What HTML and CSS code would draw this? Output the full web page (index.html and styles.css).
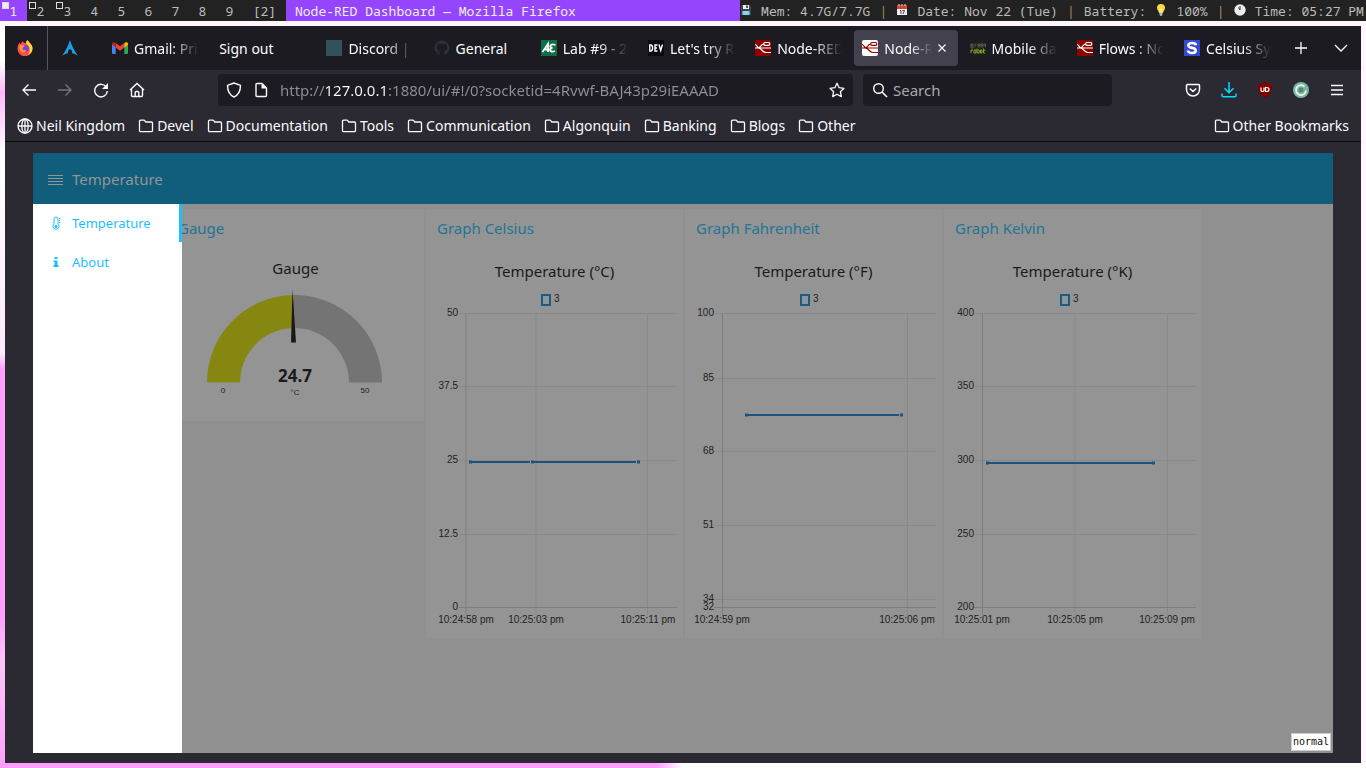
FILE: index.html
```html
<!DOCTYPE html>
<html lang="en">
<head>
<meta charset="utf-8">
<title>Node-RED Dashboard</title>
<link rel="stylesheet" href="styles.css">
</head>
<body>
<svg class="defs" aria-hidden="true">
  <symbol id="folder" viewBox="0 0 16 16"><path d="M1.500 12.500V3.300c0-.7.5-1.200 1.200-1.200h3.100c.4 0 .8.2 1 .5l1 1.400h5.600c.7 0 1.100.5 1.100 1.100v7.400c0 .7-.5 1.200-1.200 1.200H2.700c-.7 0-1.200-.5-1.200-1.200z" fill="none" stroke="currentColor" stroke-width="1.300"/></symbol>
  <symbol id="nodered" viewBox="0 0 16 16"><path d="M0 8h3c3 0 2.500-4 6-4M3 8c4 0 4 4.500 8 4.500h5M0 4.500C2 4.500 2 8 4.500 8H8M10 2.500h3.500q1.300 0 1.300 1.400T13.500 5.300H10Q8.700 5.300 8.700 3.900T10 2.500M8 8h8" fill="none" stroke="currentColor" stroke-width="1.200"/></symbol>
</svg>

<header class="statusbar">
  <nav class="tags" aria-label="Workspaces">
    <button class="tag tag-active tag-full">1</button>
    <button class="tag tag-used">2</button>
    <button class="tag tag-used">3</button>
    <button class="tag">4</button>
    <button class="tag">5</button>
    <button class="tag">6</button>
    <button class="tag">7</button>
    <button class="tag">8</button>
    <button class="tag">9</button>
    <button class="tag tag-layout">[2]</button>
  </nav>
  <div class="window-title">Node-RED Dashboard — Mozilla Firefox</div>
  <div class="stats">
    <svg class="emoji" viewBox="0 0 12 12"><path d="M1 1h9l1 1v9H1z" fill="#3b4650"/><path d="M3 1h6v4H3z" fill="#eee"/><path d="M2.500 7h7v4h-7z" fill="#8ed0f2"/><path d="M6 1.500h2v2.500H6z" fill="#555"/></svg>
    <span>Mem: 4.7G/7.7G</span><span class="bar">|</span>
    <svg class="emoji" viewBox="0 0 12 12"><path d="M1 1h10v10H1z" fill="#eee"/><path d="M1 1h10v4H1z" fill="#d8432f"/><path d="M3 0v2M6 0v2M9 0v2" stroke="#ddd"/><path d="M4 6.500h1V10M6.500 6.500h2L7 10" fill="none" stroke="#444"/></svg>
    <span>Date: Nov 22 (Tue)</span><span class="bar">|</span>
    <span>Battery:</span>
    <svg class="emoji" viewBox="0 0 12 12"><path d="M6 0a4 4 0 0 1 4 4c0 2-2 3-2 5H4c0-2-2-3-2-5a4 4 0 0 1 4-4z" fill="#fcd93b"/><path d="M4.500 9h3v2l-1 1h-1l-1-1z" fill="#aab5ba"/><path d="M5 8V5h2v3" fill="none" stroke="#fff3a8"/></svg>
    <span>100%</span><span class="bar">|</span>
    <svg class="emoji" viewBox="0 0 12 12"><circle cx="6" cy="6" r="5.700" fill="#e9edef"/><path d="M6 2v4L4.500 3.500" fill="none" stroke="#333"/></svg>
    <span>Time: 05:27 PM</span>
  </div>
</header>

<main class="window">
  <div class="tabstrip">
    <button class="pin pin-home" aria-label="Firefox View"><svg class="i16" viewBox="0 0 16 16"><path d="M.5 9C.3 6 1.500 4 2.600 2.500l.6 1.700C5 3 5 1.500 6 1c0 1.500 1.500 2 3 2.200C9 2 9.500.8 10.800 0c0 2 4.700 3.800 4.700 8.500a7.500 7.500 0 0 1-15 .5z" fill="#ff4f4a"/><path d="M10.800 0c0 2 4.700 3.800 4.700 8.500 0 3-2 5.500-4.500 6.700C14 11 13 6 9 3.200 9 2 9.500.8 10.800 0z" fill="#ffd83d"/><circle cx="8.500" cy="8.500" r="3.300" fill="#7a3fe0"/><path d="M2.500 5c2.500-.8 3.500.8 5 .8-.3 1.500-2.300 1.700-2 3.200.2 1.500 3 1.500 4 1-1 3.500-6.500 2.500-7-1.500z" fill="#ff9a2e"/></svg></button>
    <button class="pin" aria-label="Arch Linux"><svg class="i16" viewBox="0 0 16 16"><path d="M8 0C6.500 5 3.500 11 .2 15.800c2.300-1.500 4-2.300 5.700-2.600-.2-2 .6-4 2.100-4s2.300 2 2.100 4c1.700.3 3.400 1.100 5.700 2.600C12.500 11 9.500 5 8 0z" fill="#1d9ee0"/></svg></button>
    <div class="tabs">
      <button class="tab"><svg class="i16" viewBox="0 0 16 16"><path d="M0 3.500 3.700 6v8H1.200Q0 14 0 12.800z" fill="#4285f4"/><path d="M16 3.500 12.300 6v8h2.500q1.200 0 1.200-1.200z" fill="#34a853"/><path d="M3.700 3 8 6.300 12.300 3v4.500L8 10.700 3.700 7.500z" fill="#ea4335"/><path d="M0 4c0-2 2-2.500 3.700-1v4.500L0 4.800z" fill="#c5221f"/><path d="M16 4c0-2-2-2.500-3.700-1v4.500L16 4.800z" fill="#fbbc04"/></svg><span class="label">Gmail: Pri</span></button>
      <button class="tab"><span class="label label-full">Sign out</span></button>
      <button class="tab"><svg class="i16" viewBox="0 0 16 16"><path d="M0 0h16v16H0z" fill="#315259"/></svg><span class="label">Discord | #</span></button>
      <button class="tab"><svg class="i16" viewBox="0 0 16 16"><path d="M8 .5a7.500 7.500 0 0 0-2.400 14.600v-2.300c-2 .4-2.500-1-2.500-1-.4-.8-.8-1.100-.8-1.100 1.300 0 1.500 1 2.200 1.400.5.200 1 .1 1.200-.1.100-.5.300-.8.500-1-2-.3-3.400-1.200-3.400-3.600 0-.8.300-1.500.8-2 0-.5-.2-1.100.1-2 .8 0 1.500.4 2.100.8a7 7 0 0 1 4.400 0c.6-.4 1.300-.8 2.100-.8.300.9.100 1.500.1 2 .5.500.8 1.200.8 2 0 2.400-1.400 3.300-3.400 3.600.4.300.6.900.6 1.700v2.400A7.500 7.500 0 0 0 8 .5z" fill="#2b3137"/></svg><span class="label label-full">General</span></button>
      <button class="tab"><svg class="i16" viewBox="0 0 16 16"><path d="M0 0h16v16H0z" fill="#0f6e44"/><path d="m1.500 12 5.500-8v8M4 9.500h4M14.500 5q-4-1.500-5 .5-1 2 2 2.500-2.500 0-2.500 2 .5 2.500 5 1" fill="none" stroke="#fff" stroke-width="1.800"/></svg><span class="label">Lab #9 - 2</span></button>
      <button class="tab"><svg class="i16" viewBox="0 0 16 16"><path d="M0 0h16v16H0z" fill="#0a0a0a"/><path d="M1.800 5v6h1Q4.600 11 4.600 8T2.800 5zM9.500 5H7v6h2.500M7 8h2M11 4.500l1.700 6L14.500 4.500" fill="none" stroke="#fff" stroke-width="1.400"/></svg><span class="label">Let's try R</span></button>
      <button class="tab"><svg class="i16 nr" viewBox="0 0 16 16"><use href="#nodered"/></svg><span class="label">Node-RED</span></button>
      <button class="tab tab-active"><svg class="i16 nr-light" viewBox="0 0 16 16"><use href="#nodered"/></svg><span class="label">Node-RE</span><svg class="close" viewBox="0 0 8 8"><path d="m.5.5 7 7m0-7-7 7" stroke="currentColor" stroke-width="1.200"/></svg></button>
      <button class="tab"><svg class="i16" viewBox="0 0 16 16"><path d="M0 0h16v16H0z" fill="#1d1e1d"/><path d="M1 4h2v4H1zM1 4v2h2M5 7V4h1.500M8 5.500h2V4H8v3h2M11 5.500h2V4h-2v3h2M14 7V4h1.500v3" fill="none" stroke="#555b55"/><path d="M1 13v-3h2M4 10h2v3H4zM7 8.500V13h2.200v-3H7M10.500 10h1.500v3h-1.500zM13.500 8.500V13H15M13 10.200h2.500" fill="none" stroke="#86a62a"/></svg><span class="label">Mobile da</span></button>
      <button class="tab"><svg class="i16 nr" viewBox="0 0 16 16"><use href="#nodered"/></svg><span class="label">Flows : No</span></button>
      <button class="tab"><svg class="i16" viewBox="0 0 16 16"><path d="M0 0h16v16H0z" fill="#3747d6"/><path d="M12 5.200Q11.500 3 8 3T4.300 5.400Q4.500 7.300 8 7.900t3.800 2.700Q11.600 13 8 13t-4.200-2.500" fill="none" stroke="#fff" stroke-width="2.600"/></svg><span class="label">Celsius Sy</span></button>
    </div>
    <button class="tool" aria-label="New tab"><svg class="i16" viewBox="0 0 16 16"><path d="M8 2v12M2 8h12" stroke="currentColor" stroke-width="1.300"/></svg></button>
    <button class="tool" aria-label="List tabs"><svg class="i16" viewBox="0 0 16 16"><path d="m2 5 6 6 6-6" fill="none" stroke="currentColor" stroke-width="1.300"/></svg></button>
  </div>

  <div class="toolbar">
    <button class="tool" aria-label="Back"><svg class="i16" viewBox="0 0 16 16"><path d="M15 8H2M7.500 2.500 2 8l5.500 5.500" fill="none" stroke="currentColor" stroke-width="1.300"/></svg></button>
    <button class="tool tool-off" aria-label="Forward"><svg class="i16" viewBox="0 0 16 16"><path d="M1 8h13M8.500 2.500 14 8l-5.500 5.500" fill="none" stroke="currentColor" stroke-width="1.300"/></svg></button>
    <button class="tool" aria-label="Reload"><svg class="i16" viewBox="0 0 16 16"><path d="M13.500 5.500A6.300 6.300 0 1 0 14.300 9" fill="none" stroke="currentColor" stroke-width="1.400"/><path d="M15 1v6H9z" fill="currentColor"/></svg></button>
    <button class="tool" aria-label="Home"><svg class="i16" viewBox="0 0 16 16"><path d="M1 8 8 1.500 15 8M2.500 7v6.500q0 1 1 1h9q1 0 1-1V7M6.200 14.500v-4q0-1 1-1h1.600q1 0 1 1v4" fill="none" stroke="currentColor" stroke-width="1.400"/></svg></button>
    <div class="urlbar">
      <svg class="i16" viewBox="0 0 16 16"><path d="M8 1 14.500 3.300c0 5.500-1.500 9.500-6.500 11.700C3 12.800 1.500 8.800 1.500 3.300z" fill="none" stroke="currentColor" stroke-width="1.400" stroke-linejoin="round"/></svg>
      <svg class="i16" viewBox="0 0 16 16"><path d="M4 1.500h5l4.500 4.500v7.500q0 1-1 1H4q-1 0-1-1v-11q0-1 1-1z" fill="none" stroke="currentColor" stroke-width="1.400"/><path d="M8.500 1.500V6.500h5z" fill="currentColor"/></svg>
      <input class="url" type="text" aria-label="Address" value="http://127.0.0.1:1880/ui/#!/0?socketid=4Rvwf-BAJ43p29iEAAAD">
      <svg class="i16" viewBox="0 0 16 16"><path d="m8 1.200 2.100 4.500 4.900.6-3.600 3.400.9 4.900L8 12.200l-4.300 2.400.9-4.900L1 6.300l4.900-.6z" fill="none" stroke="currentColor" stroke-width="1.300" stroke-linejoin="round"/></svg>
    </div>
    <label class="searchbar">
      <svg class="i16" viewBox="0 0 16 16"><circle cx="6.500" cy="6.500" r="4.800" fill="none" stroke="currentColor" stroke-width="1.400"/><path d="m10 10 5 5" stroke="currentColor" stroke-width="1.600"/></svg>
      <input class="search" type="text" aria-label="Search" placeholder="Search">
    </label>
    <div class="actions">
      <button class="tool" aria-label="Pocket"><svg class="i16" viewBox="0 0 16 16"><path d="M2.500 2.500h11q1 0 1 1v4a6.500 6.500 0 0 1-13 0v-4q0-1 1-1zM4.800 6.500 8 9.500l3.200-3" fill="none" stroke="currentColor" stroke-width="1.500"/></svg></button>
      <button class="tool tool-cyan" aria-label="Downloads"><svg class="i16" viewBox="0 0 16 16"><path d="M8 0v10.500M3.500 6.200 8 10.700l4.500-4.500M1 11.500v2q0 1.200 1.200 1.200h11.600q1.200 0 1.200-1.200v-2" fill="none" stroke="currentColor" stroke-width="1.500"/></svg></button>
      <button class="tool" aria-label="uBlock Origin"><svg class="i16" viewBox="0 0 16 16"><path d="M8 0q3 2 7 2c0 7-1 11-7 14C2 13 1 9 1 2q4 0 7-2z" fill="#800000"/><path d="M4 5.500v3q0 1 1.500 1T7 8.500v-3M8.500 5.500v4h1q2.500 0 2.500-2t-2.500-2z" fill="none" stroke="#fff" stroke-width="1.200"/></svg></button>
      <button class="tool" aria-label="Extension"><svg class="i16" viewBox="0 0 16 16"><circle cx="8" cy="8" r="8" fill="#79b8a0"/><path d="M11.500 4.500A5 5 0 1 0 13 8.500" fill="none" stroke="#e8f6f0" stroke-width="1.800"/><circle cx="8" cy="8" r="2.500" fill="#4e8873"/></svg></button>
      <button class="tool" aria-label="Menu"><svg class="i16" viewBox="0 0 16 16"><path d="M2 3.500h12M2 8h12M2 12.500h12" stroke="currentColor" stroke-width="1.400"/></svg></button>
    </div>
  </div>

  <nav class="bookmarks" aria-label="Bookmarks">
    <a class="bm" href="#"><svg class="i16" viewBox="0 0 16 16"><g fill="none" stroke="currentColor" stroke-width="1.300"><circle cx="8" cy="8" r="7"/><ellipse cx="8" cy="8" rx="3.200" ry="7"/><path d="M1 8h14M8 1v14"/></g></svg>Neil Kingdom</a>
    <a class="bm" href="#"><svg class="i16"><use href="#folder"/></svg>Devel</a>
    <a class="bm" href="#"><svg class="i16"><use href="#folder"/></svg>Documentation</a>
    <a class="bm" href="#"><svg class="i16"><use href="#folder"/></svg>Tools</a>
    <a class="bm" href="#"><svg class="i16"><use href="#folder"/></svg>Communication</a>
    <a class="bm" href="#"><svg class="i16"><use href="#folder"/></svg>Algonquin</a>
    <a class="bm" href="#"><svg class="i16"><use href="#folder"/></svg>Banking</a>
    <a class="bm" href="#"><svg class="i16"><use href="#folder"/></svg>Blogs</a>
    <a class="bm" href="#"><svg class="i16"><use href="#folder"/></svg>Other</a>
    <a class="bm bm-end" href="#"><svg class="i16"><use href="#folder"/></svg>Other Bookmarks</a>
  </nav>

  <div class="viewport">
    <div class="dashboard">
      <header class="dash-head">
        <button class="burger" aria-label="Toggle menu"><svg class="i16" viewBox="0 0 16 16"><path d="M0 4.500h15M0 7.500h15M0 10.500h15M0 13.500h15" stroke="currentColor"/></svg></button>
        <h1 class="dash-title">Temperature</h1>
      </header>
      <div class="dash-body">
        <section class="card">
          <h2 class="card-title">Gauge</h2>
          <h3 class="widget-title widget-title-gauge">Gauge</h3>
          <svg class="plot" viewBox="0 0 257 132">
            <path d="M40 93.500A87.500 87.500 0 0 1 126 6V39A54.500 54.500 0 0 0 73 93.500z" fill="#868711"/>
            <path d="M126 6A87.500 87.500 0 0 1 215 93.500H182A54.500 54.500 0 0 0 126 39z" fill="#747474"/>
            <path d="m125.500 0-1.500 53.500h5z" fill="#1a1a1a"/>
            <text class="value" x="128" y="93">24.7</text>
            <text class="tiny" x="56" y="104">0</text>
            <text class="tiny" x="128" y="106">°C</text>
            <text class="tiny" x="198" y="104">50</text>
          </svg>
        </section>

        <section class="card">
          <h2 class="card-title">Graph Celsius</h2>
          <h3 class="widget-title">Temperature (°C)</h3>
          <svg class="plot" viewBox="0 0 257 349">
            <rect class="key" x="116" y="6" width="8" height="10"/><text class="axis start" x="128" y="13">3</text>
            <path class="grid" d="M33 24.500h218M33 97.500h218M33 171.500h218M33 245.500h218M110 24v302M221.500 24v302"/>
            <path class="zero" d="M33 318.500h218M40 24v302"/>
            <path class="line" d="M46 173h58m4 0h102"/><path class="dots" d="M43 173h3m59 0h3m103 0h3"/>
            <g class="axis end"><text x="32" y="27">50</text><text x="32" y="100">37.5</text><text x="32" y="174">25</text><text x="32" y="248">12.5</text><text x="32" y="321">0</text></g>
            <g class="axis"><text x="40" y="334">10:24:58 pm</text><text x="110" y="334">10:25:03 pm</text><text x="222" y="334">10:25:11 pm</text></g>
          </svg>
        </section>

        <section class="card">
          <h2 class="card-title">Graph Fahrenheit</h2>
          <h3 class="widget-title">Temperature (°F)</h3>
          <svg class="plot" viewBox="0 0 257 349">
            <rect class="key" x="116" y="6" width="8" height="10"/><text class="axis start" x="128" y="13">3</text>
            <path class="grid" d="M29 24.500h222M29 89.500h222M29 162.500h222M29 236.500h222M29 310.500h222M222.500 24v302"/>
            <path class="zero" d="M29 318.500h222M37.500 24v302"/>
            <path class="line" d="M63 126h151"/><path class="dots" d="M60 126h3m152 0h3"/>
            <g class="axis end"><text x="29" y="27">100</text><text x="29" y="92">85</text><text x="29" y="165">68</text><text x="29" y="239">51</text><text x="29" y="313">34</text><text x="29" y="321">32</text></g>
            <g class="axis"><text x="37" y="334">10:24:59 pm</text><text x="222" y="334">10:25:06 pm</text></g>
          </svg>
        </section>

        <section class="card">
          <h2 class="card-title">Graph Kelvin</h2>
          <h3 class="widget-title">Temperature (°K)</h3>
          <svg class="plot" viewBox="0 0 257 349">
            <rect class="key" x="117" y="6" width="8" height="10"/><text class="axis start" x="129" y="13">3</text>
            <path class="grid" d="M30 24.500h222M30 97.500h222M30 171.500h222M30 245.500h222M131 24v302M223.500 24v302"/>
            <path class="zero" d="M30 318.500h222M38.500 24v302"/>
            <path class="line" d="M45 174h163"/><path class="dots" d="M42 174h3m163 0h3"/>
            <g class="axis end"><text x="30" y="27">400</text><text x="30" y="100">350</text><text x="30" y="174">300</text><text x="30" y="248">250</text><text x="30" y="321">200</text></g>
            <g class="axis"><text x="38" y="334">10:25:01 pm</text><text x="131" y="334">10:25:05 pm</text><text x="223" y="334">10:25:09 pm</text></g>
          </svg>
        </section>

        <nav class="drawer" aria-label="Pages">
          <a class="item item-active" href="#"><svg class="i14" viewBox="0 0 14 14"><path d="M5 8V3q0-2 2-2t2 2v5M5 8a3 3 0 1 0 4 0" fill="none" stroke="currentColor"/><circle cx="7" cy="10.500" r="1.500" fill="currentColor"/><path d="M10 2.500h1.500M10 4.500h1M10 6.500h1.500" stroke="currentColor"/></svg>Temperature</a>
          <a class="item" href="#"><svg class="i14" viewBox="0 0 14 14"><path d="M5.500 2h3v2h-3zM4.500 5.500h4V10h1v2h-5v-2h1V7h-1z" fill="currentColor"/></svg>About</a>
        </nav>
      </div>
      <div class="mode">normal</div>
    </div>
  </div>
</main>
</body>
</html>
```
FILE: styles.css
```css
* { box-sizing: border-box; }

body {
  margin: 0;
  height: 100vh;
  display: flex;
  flex-direction: column;
  overflow: hidden;
  font: 14px/20px "Noto Sans", sans-serif;
  color: #fbfbfe;
  background:
    linear-gradient(90deg, #ff9ffb 48%, #fff 50%) bottom / 100% 5px no-repeat,
    linear-gradient(#fff 8%, #ffb8fc 12%, #fff 20%, #ffeafd 46%, #ff9ffb 48%, #ff9ffb 80%, #ffc4fc 86%, #ff9ffb) left / 5px 100% no-repeat,
    #fff6ff;
}

button {
  border: 0;
  padding: 0;
  margin: 0;
  background: none;
  color: inherit;
  font: inherit;
}

a { color: inherit; text-decoration: none; }
h1, h2, h3 { margin: 0; font-weight: 400; }
.defs { position: absolute; width: 0; height: 0; }
.i16 { width: 16px; height: 16px; flex: none; }
.i14 { width: 14px; height: 14px; flex: none; }
.nr { background: #8f0000; color: #fff; border-radius: 1px; }
.nr-light { background: #fff; color: #8f0000; border-radius: 2px; }

/* Window manager bar */
.statusbar {
  display: flex;
  flex: none;
  height: 21px;
  background: #222;
  color: #bbb;
  font: 13px/22px "Noto Sans Mono", "DejaVu Sans Mono", monospace;
  white-space: pre;
}
.tags { display: flex; }
.tag { position: relative; width: 27px; }
.tag-active { background: #9645ff; color: #eee; }
.tag-layout { width: 43px; }
.tag-used::before,
.tag-full::before {
  content: "";
  position: absolute;
  left: 2px;
  top: 2px;
  width: 5px;
  height: 5px;
  border: 1px solid #ddd;
}
.tag-full::before { background: #eee; }
.window-title { flex: 1; padding-left: 9px; background: #9645ff; color: #eee; }
.stats {
  display: flex;
  flex: 0 0 626px;
  justify-content: space-between;
  padding: 0 2px 0 0;
}
.emoji { width: 12px; height: 12px; margin-top: 4px; }
.bar { color: #b08c68; }

/* Browser window */
.window {
  flex: 1;
  min-height: 0;
  margin: 5px;
  display: flex;
  flex-direction: column;
  background: #2b2a33;
}
.tabstrip { display: flex; flex: none; height: 44px; background: #1c1b22; }
.pin { width: 44px; margin-right: 10px; display: grid; place-items: center; }
.pin-home { width: 43px; margin: 0; padding-right: 2px; border-right: 1px solid #55545c; }
.tabs { display: flex; flex: 1; min-width: 0; }
.tab {
  display: flex;
  align-items: center;
  gap: 6px;
  flex: 1 1 0;
  min-width: 0;
  margin: 4px 2px;
  padding: 0 8px;
  border-radius: 4px;
}
.tab-active { background: #42414d; }
.label {
  flex: 1;
  padding-top: 2px;
  overflow: hidden;
  white-space: nowrap;
  text-align: left;
  mask-image: linear-gradient(90deg, #000 55%, transparent);
}
.label-full { mask-image: none; }
.close { width: 8px; height: 8px; flex: none; margin-right: 4px; }
.tool { width: 36px; flex: none; display: grid; place-items: center; }
.tabstrip .tool { width: 40px; }
.tool-off { color: #77767e; }
.tool-cyan { color: #00ddff; }

.toolbar { display: flex; flex: none; height: 40px; padding: 4px 6px; font-size: 15px; }
.urlbar,
.searchbar {
  display: flex;
  align-items: center;
  gap: 5px;
  min-width: 0;
  padding: 0 8px;
  border-radius: 4px;
  background: #1c1b22;
}
.urlbar { flex: 1; margin: 0 10px 0 63px; gap: 11px; }
.searchbar { flex: 0 1 249px; margin-right: 63px; padding-left: 9px; }
.url,
.search {
  flex: 1;
  min-width: 0;
  padding: 0;
  border: 0;
  outline: 0;
  background: none;
  color: #fbfbfe;
  font: inherit;
}
.url {
  color: transparent;
  background: linear-gradient(90deg, #8f8e96 45px, #fbfbfe 45px 109px, #8f8e96 109px);
  background-clip: text;
}
.search::placeholder { color: #a9a9b0; opacity: 1; }
.actions { display: flex; }

.bookmarks {
  display: flex;
  flex: none;
  align-items: center;
  gap: 13px;
  height: 32px;
  padding: 1px 12px 0;
  border-bottom: 1px solid #0c0c0d;
  white-space: nowrap;
}
.bm { display: flex; align-items: center; gap: 3px; }
.bm-end { margin-left: auto; }

/* Dashboard page */
.viewport { flex: 1; min-height: 0; display: flex; padding: 11px 28px 10px; }
.dashboard {
  position: relative;
  flex: 1;
  display: flex;
  flex-direction: column;
  background: #909090;
}
.dash-head {
  display: flex;
  align-items: center;
  gap: 8px;
  flex: none;
  height: 51px;
  padding: 0 15px;
  background: #105d7c;
  color: #949494;
}
.burger { display: grid; }
.dash-title { font-size: 15px; line-height: 20px; }
.dash-body {
  position: relative;
  flex: 1;
  min-height: 0;
  display: flex;
  justify-content: center;
  align-items: flex-start;
  gap: 2px;
  padding: 5px 0 0 2px;
}
.card { width: 257px; background: #949494; color: #1a1a1a; }
.card-title {
  padding: 9px 11px 11px;
  font-size: 15px;
  line-height: 20px;
  color: #217696;
}
.widget-title {
  padding: 12px 0 8px;
  font-size: 15px;
  line-height: 20px;
  text-align: center;
}
.widget-title-gauge { padding: 9px 0 11px; }
.plot { display: block; width: 100%; }
.value { font: 700 17px "Noto Sans", sans-serif; text-anchor: middle; fill: #1a1a1a; }
.tiny { font: 8px "Liberation Sans", sans-serif; text-anchor: middle; fill: #222; }
.axis { font: 10px "Liberation Sans", sans-serif; text-anchor: middle; fill: #222; }
.start { text-anchor: start; }
.end { text-anchor: end; }
.key { fill: #8c969d; stroke: #1f5a85; stroke-width: 2px; }
.grid { fill: none; stroke: #898989; }
.zero { fill: none; stroke: #7e7e7e; }
.line { fill: none; stroke: #1a5380; stroke-width: 2px; }
.dots { fill: none; stroke: #1a5380; stroke-width: 3px; }

.drawer {
  position: absolute;
  inset: 0 auto 0 0;
  width: 149px;
  background: #fff;
  color: #1bbfff;
}
.item {
  display: flex;
  align-items: center;
  gap: 9px;
  height: 38px;
  margin-bottom: 1px;
  padding-left: 16px;
  font-size: 13px;
}
.item-active { border-right: 3px solid #1bbfff; }
.mode {
  position: absolute;
  right: 2px;
  bottom: 2px;
  padding: 0 1px;
  border: 1px solid #ccc;
  background: #fff;
  color: #111;
  font: 10px/16px "DejaVu Sans Mono", monospace;
}
```
